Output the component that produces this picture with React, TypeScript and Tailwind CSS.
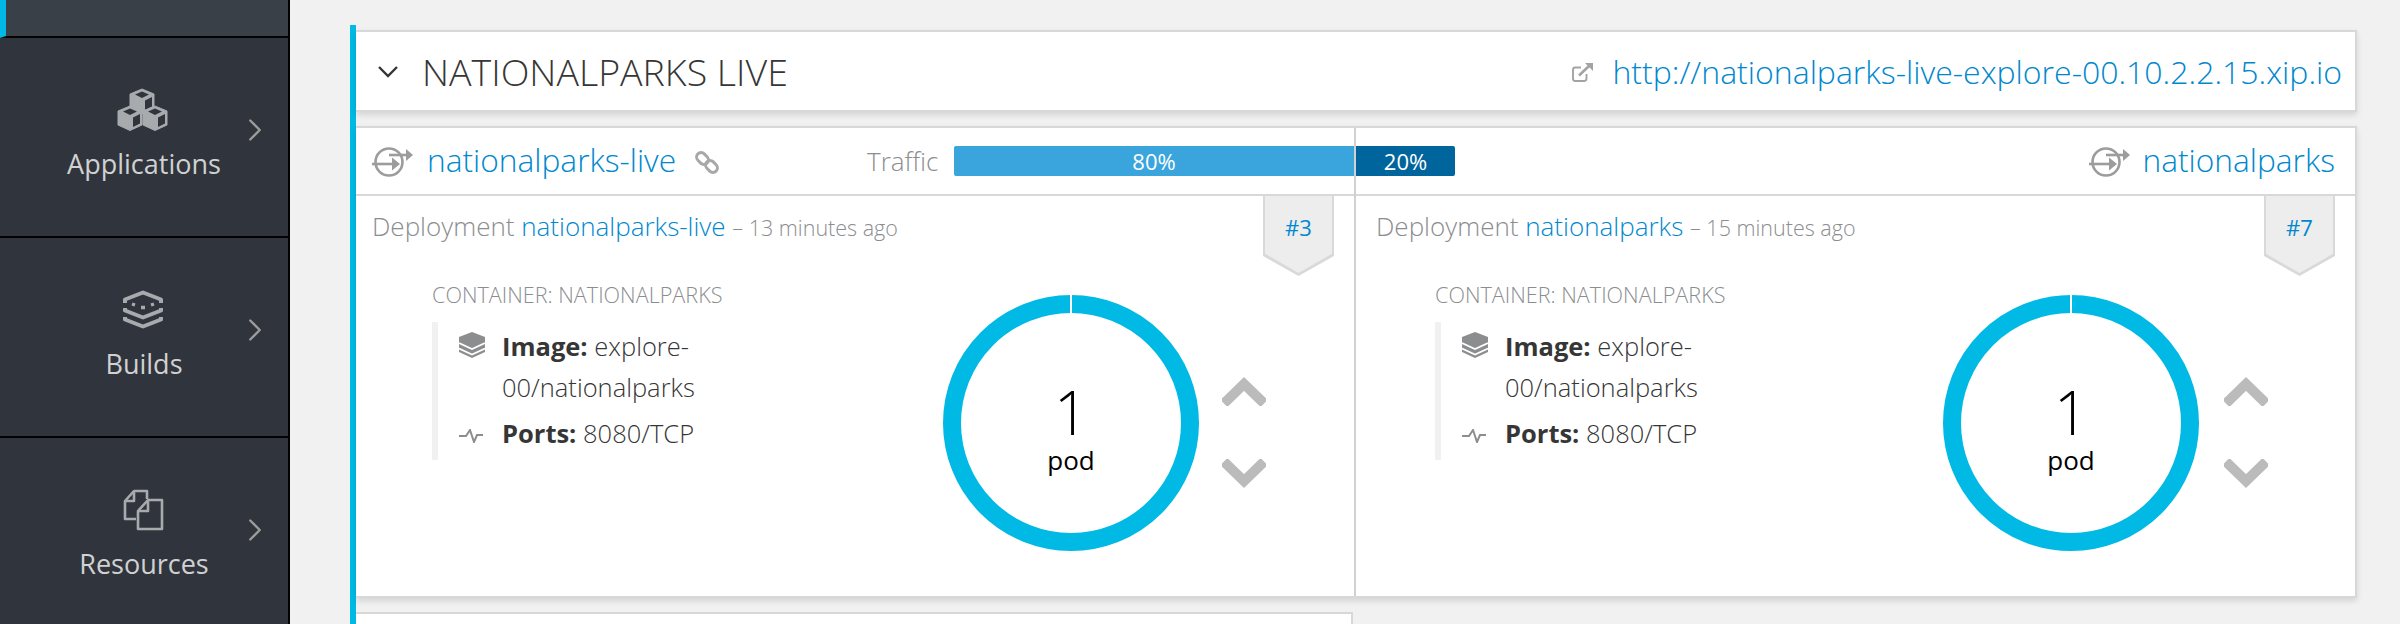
import { ChevronRight } from 'lucide-react';

const AppsIcon = () => (
  <svg width="80" height="60" viewBox="0 0 80 60" className="block">
    {/* top, left, right cube */}
    {[[38, 9], [26, 26], [51, 26]].map(([x, y], i) => (
      <g key={i} transform={`translate(${x} ${y})`}>
        <path d="M0 0 L12 5 V19 L0 24.5 L-12 19 V5 Z" fill="#a8abae" stroke="#a8abae" strokeWidth="1" strokeLinejoin="round" />
        <path d="M0 2.5 L7 5.5 L0 9 L-7 5.5 Z" fill="#30353d" />
        <path d="M3 11.5 L10 8 V17.5 L3 21 Z" fill="#30353d" />
      </g>
    ))}
  </svg>
);

const BuildsIcon = () => (
  <svg width="80" height="60" viewBox="0 0 80 60" fill="none" stroke="#a8abae" strokeWidth="4" className="block">
    <path d="M21 23 V19.5 L39 12.5 L57 19.5 V23" strokeLinejoin="round" />
    <path d="M28 24 L31 25 M37 27.5 L41 27.5 M47 25 L50 24" strokeWidth="3.4" />
    <path d="M21 28 V30.5 L39 37.5 L57 30.5 V28" strokeLinejoin="round" />
    <path d="M21 37 V39.5 L39 46.5 L57 39.5 V37" strokeLinejoin="round" />
  </svg>
);

const FilesIcon = () => (
  <svg width="80" height="60" viewBox="0 0 80 60" fill="none" stroke="#a8abae" strokeWidth="2.6" strokeLinejoin="round" className="block">
    <path d="M32 39 H21 V21 L30 11 H43 V19" />
    <path d="M30 11 V21 H21" />
    <path d="M34 31 L44 20 H58 V49 H34 Z" />
    <path d="M44 20 V31 H34" />
  </svg>
);

const ServiceIcon = () => (
  <svg width="60" height="45" viewBox="0 0 60 45" fill="none" className="block shrink-0">
    <circle cx="24" cy="23" r="13.5" stroke="#9c9c9c" strokeWidth="2.6" />
    <path d="M7 25 H29" stroke="#9c9c9c" strokeWidth="2.6" />
    <path d="M27 18.5 L35 25 L27 31.5 Z" fill="#9c9c9c" />
    <path d="M24 16 H42" stroke="#9c9c9c" strokeWidth="2.6" />
    <path d="M41 10 L48 16 L41 22 Z" fill="#9c9c9c" />
  </svg>
);

const LinkIcon = () => (
  <svg width="40" height="35" viewBox="0 0 40 35" fill="none" stroke="#a8a8a8" strokeWidth="3" className="block">
    <rect x="7" y="10" width="13" height="9" rx="4.5" transform="rotate(45 13.5 14.5)" />
    <rect x="16" y="18" width="13" height="9" rx="4.5" transform="rotate(45 22.5 22.5)" />
  </svg>
);

const ExternalIcon = () => (
  <svg width="21" height="19" viewBox="0 0 21 19" fill="none" className="block">
    <path d="M14.5 11 V15.5 Q14.5 18 12 18 H3 Q1 18 1 15.5 V7 Q1 4.5 3 4.5 H9" stroke="#a3a3a3" strokeWidth="1.9" />
    <path d="M7 12.5 L17 3" stroke="#a3a3a3" strokeWidth="2.6" />
    <path d="M13 0 H21 V8 Z" fill="#a3a3a3" />
  </svg>
);

const ImageIcon = () => (
  <svg width="26" height="26" viewBox="0 0 26 26" className="block">
    <path d="M13 0 L26 5 V20 L13 26 L0 20 V5 Z" fill="#8b8d8f" />
    <path d="M0 11 L13 17 L26 11 M0 16.5 L13 22.5 L26 16.5" fill="none" stroke="#fff" strokeWidth="1.7" />
  </svg>
);

const PortsIcon = () => (
  <svg width="24" height="14" viewBox="0 0 24 14" fill="none" stroke="#8b8d8f" strokeWidth="2" className="block">
    <path d="M0 7 H7 L11 1 L15 13 L18 6 H24" />
  </svg>
);

const AngleIcon = ({ down }: { down?: boolean }) => (
  <svg width="44" height="29" viewBox="0 0 44 29" fill="none" className="block">
    <path
      d={down ? 'M5.5 6 L22 22 L38.5 6' : 'M5.5 23 L22 7 L38.5 23'}
      stroke="#bbbbbb"
      strokeWidth="10"
      strokeLinecap="square"
      strokeLinejoin="miter"
    />
  </svg>
);

const NavItem = ({ label, icon }: { label: string; icon: React.ReactNode }) => (
  <div className="relative h-[200px] flex flex-col items-center border-b-2 border-[#030303] pt-[42px]">
    {icon}
    <div className="mt-[6px] text-[27px] leading-[36px] text-[#d1d1d1]">{label}</div>
    <ChevronRight className="absolute left-[236px] top-[73px] w-[38px] h-[38px] text-[#9c9c9c]" strokeWidth={1.5} />
  </div>
);

const Donut = () => (
  <div className="relative w-[256px] h-[256px] mt-[15px] shrink-0">
    <svg width="256" height="256" viewBox="0 0 256 256" className="block">
      <circle cx="128" cy="128" r="119" fill="none" stroke="#00b9e4" strokeWidth="18" />
      <rect x="127" y="0" width="2" height="19" fill="#fff" />
    </svg>
    <div className="absolute inset-0 flex flex-col items-center text-black">
      <div className="mt-[87px] text-[60px] leading-[60px] font-light">1</div>
      <div className="text-[26px] leading-[36px]">pod</div>
    </div>
  </div>
);

const PaneBody = ({ name, ago, rev, left }: { name: string; ago: string; rev: string; left: 'a' | 'b' }) => (
  <div className="relative flex-1">
    <div className={`mt-[12px] w-fit h-[36px] text-[26px] leading-[36px] font-light text-[#8b8d8f] ${left === 'a' ? 'ml-[16px]' : 'ml-[20px]'}`}>
      Deployment <span className="text-[#0088ce]">{name}</span> <span className="text-[21.5px]">– {ago}</span>
    </div>
    <div className={`mt-[36px] flex ${left === 'a' ? 'pl-[76px]' : 'pl-[79px]'}`}>
      <div className={`shrink-0 ${left === 'a' ? 'w-[511px]' : 'w-[508px]'}`}>
        <div className="h-[30px] text-[21.6px] leading-[30px] font-light text-[#8b8d8f]">CONTAINER: NATIONALPARKS</div>
        <div className="mt-[12px] w-[300px] h-[138px] border-l-[6px] border-[#f1f1f1] pl-[20px] pt-[4px] text-[25.5px] leading-[41px] font-light text-[#363636]">
          <div className="flex gap-[17px]">
            <div className="pt-[6px] pl-px shrink-0"><ImageIcon /></div>
            <div className="w-[200px]"><b className="font-bold">Image:</b> explore-00/nationalparks</div>
          </div>
          <div className="flex gap-[17px] mt-[5px]">
            <div className="pt-[16px] pl-px w-[27px] shrink-0"><PortsIcon /></div>
            <div className="whitespace-nowrap"><b className="font-bold">Ports:</b> 8080/TCP</div>
          </div>
        </div>
      </div>
      <Donut />
      <div className={`pt-[97px] flex flex-col gap-[53px] ${left === 'a' ? 'ml-[23px]' : 'ml-[25px]'}`}>
        <AngleIcon />
        <AngleIcon down />
      </div>
    </div>
    <div className="absolute top-0 right-[20px] w-[71px] h-[80px] bg-[#d9d9d9] [clip-path:polygon(0_0,100%_0,100%_75%,50%_100%,0_75%)]">
      <div className="mx-[2px] h-[77px] bg-[#ededed] flex justify-center pt-[14px] text-[22px] leading-[34px] text-[#0088ce] [clip-path:polygon(0_0,100%_0,100%_75%,50%_100%,0_75%)]">
        {rev}
      </div>
    </div>
  </div>
);

export default function App() {
  return (
    <div className="flex w-[2400px] h-[624px] overflow-hidden bg-[#f1f1f1] font-['Open_Sans',sans-serif]">
      <aside className="w-[290px] shrink-0 bg-[#30353d] border-r-2 border-[#030303]">
        <div className="h-[38px] bg-[#3a4048] border-b-2 border-[#030303] border-l-[6px] border-l-[#00b9e4]" />
        <NavItem label="Applications" icon={<AppsIcon />} />
        <NavItem label="Builds" icon={<BuildsIcon />} />
        <NavItem label="Resources" icon={<FilesIcon />} />
      </aside>

      <main className="flex-1 pl-[60px] pr-[43px] pt-[25px]">
        <div className="border-l-[6px] border-[#00b9e4] pt-[5px] h-full">
          {/* project route header */}
          <div className="h-[82px] bg-white border-2 border-l-0 border-[#d8d8d8] shadow-[0_3px_6px_rgba(3,3,3,0.12)] flex items-center pl-[22px] pr-[13px] pt-[2px]">
            <svg width="20" height="12" viewBox="0 0 20 12" fill="none" stroke="#363636" strokeWidth="2.4" className="block shrink-0">
              <path d="M1 1 L10 10 L19 1" />
            </svg>
            <div className="ml-[24px] text-[37.5px] leading-[50px] font-light text-[#363636]">NATIONALPARKS LIVE</div>
            <div className="ml-auto flex items-center gap-[19px]">
              <ExternalIcon />
              <a className="text-[32px] leading-[50px] font-light text-[#0088ce]">http://nationalparks-live-explore-00.10.2.2.15.xip.io</a>
            </div>
          </div>

          {/* deployments */}
          <div className="mt-[14px] h-[472px] bg-white border-2 border-l-0 border-[#d8d8d8] shadow-[0_3px_6px_rgba(3,3,3,0.12)] flex">
            <section className="w-[1000px] shrink-0 border-r-2 border-[#d1d1d1] flex flex-col">
              <div className="h-[68px] shrink-0 border-b-2 border-[#d8d8d8] flex items-center pl-[9px]">
                <ServiceIcon />
                <div className="ml-[2px] mt-[-2px] text-[31.7px] leading-[44px] font-light text-[#0088ce]">nationalparks-live</div>
                <div className="ml-[13px]"><LinkIcon /></div>
                <div className="ml-[138px] text-[26px] leading-[36px] font-light text-[#8b8d8f]">Traffic</div>
                <div className="ml-auto w-[400px] h-[30px] bg-[#39a5dc] rounded-l-[2px] text-white text-[22px] leading-[30px] text-center">80%</div>
              </div>
              <PaneBody left="a" name="nationalparks-live" ago="13 minutes ago" rev="#3" />
            </section>
            <section className="flex-1 flex flex-col">
              <div className="h-[68px] shrink-0 border-b-2 border-[#d8d8d8] flex items-center pr-[20px]">
                <div className="w-[99px] h-[30px] bg-[#00659c] rounded-r-[2px] text-white text-[22px] leading-[30px] text-center">20%</div>
                <div className="ml-auto"><ServiceIcon /></div>
                <div className="mt-[-2px] text-[31.7px] leading-[44px] font-light text-[#0088ce]">nationalparks</div>
              </div>
              <PaneBody left="b" name="nationalparks" ago="15 minutes ago" rev="#7" />
            </section>
          </div>

          <div className="mt-[14px] w-[997px] h-[40px] bg-white border-2 border-l-0 border-[#d8d8d8]" />
        </div>
      </main>
    </div>
  );
}
